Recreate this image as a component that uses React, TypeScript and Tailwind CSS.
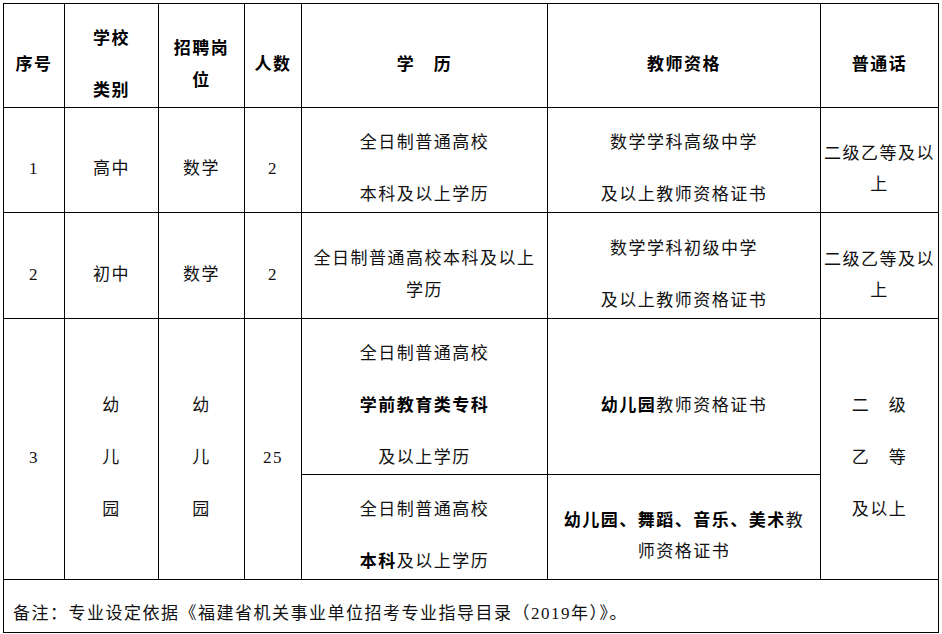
import React from "react";

const font = "font-['Liberation_Serif','Noto_Sans_CJK_SC',serif]";

function Cell({
  children,
  className = "",
}: {
  children?: React.ReactNode;
  className?: string;
}) {
  return (
    <div
      className={`flex flex-col items-center justify-center bg-white pt-[18px] text-center text-[17px] tracking-[1.5px] text-[#111] ${className}`}
    >
      {children}
    </div>
  );
}

function Head({ children, className = "" }: { children: React.ReactNode; className?: string }) {
  return <Cell className={`font-bold text-black ${className}`}>{children}</Cell>;
}

export default function App() {
  return (
    <div className={`min-h-[634px] w-[942px] bg-white ${font}`}>
      <div className="ml-[3px] mt-[3px] grid w-[936px] grid-cols-[60px_93px_85px_56px_245px_272px_117px] grid-rows-[103px_104px_105px_155px_104px_52px] gap-px border border-black bg-black">
        {/* header */}
        <Head>序号</Head>
        <Head className="leading-[52px]">
          <span>学校</span>
          <span>类别</span>
        </Head>
        <Head className="leading-[32px]">
          <span>招聘岗</span>
          <span>位</span>
        </Head>
        <Head>人数</Head>
        <Head>学　历</Head>
        <Head>教师资格</Head>
        <Head>普通话</Head>

        {/* 高中 */}
        <Cell>1</Cell>
        <Cell>高中</Cell>
        <Cell>数学</Cell>
        <Cell>2</Cell>
        <Cell className="leading-[52px]">
          <span>全日制普通高校</span>
          <span>本科及以上学历</span>
        </Cell>
        <Cell className="leading-[52px]">
          <span>数学学科高级中学</span>
          <span>及以上教师资格证书</span>
        </Cell>
        <Cell className="leading-[31px]">
          <span>二级乙等及以</span>
          <span>上</span>
        </Cell>

        {/* 初中 */}
        <Cell>2</Cell>
        <Cell>初中</Cell>
        <Cell>数学</Cell>
        <Cell>2</Cell>
        <Cell className="leading-[32px]">
          <span>全日制普通高校本科及以上</span>
          <span>学历</span>
        </Cell>
        <Cell className="leading-[52px]">
          <span>数学学科初级中学</span>
          <span>及以上教师资格证书</span>
        </Cell>
        <Cell className="leading-[31px]">
          <span>二级乙等及以</span>
          <span>上</span>
        </Cell>

        {/* 幼儿园 */}
        <Cell className="row-span-2">3</Cell>
        <Cell className="row-span-2 leading-[52px]">
          <span>幼</span>
          <span>儿</span>
          <span>园</span>
        </Cell>
        <Cell className="row-span-2 leading-[52px]">
          <span>幼</span>
          <span>儿</span>
          <span>园</span>
        </Cell>
        <Cell className="row-span-2">25</Cell>
        <Cell className="leading-[52px]">
          <span>全日制普通高校</span>
          <span className="font-bold text-black">学前教育类专科</span>
          <span>及以上学历</span>
        </Cell>
        <Cell>
          <span>
            <b className="text-black">幼儿园</b>教师资格证书
          </span>
        </Cell>
        <Cell className="row-span-2 leading-[52px]">
          <span>二　级</span>
          <span>乙　等</span>
          <span>及以上</span>
        </Cell>
        <Cell className="leading-[52px]">
          <span>全日制普通高校</span>
          <span>
            <b className="text-black">本科</b>及以上学历
          </span>
        </Cell>
        <Cell className="leading-[31px]">
          <span>
            <b className="text-black">幼儿园、舞蹈、音乐、美术</b>教
          </span>
          <span>师资格证书</span>
        </Cell>

        {/* note */}
        <div className="col-span-7 flex items-center bg-white pl-[9px] pt-[15px] text-[17px] tracking-[1.5px] text-[#111]">
          备注：专业设定依据《福建省机关事业单位招考专业指导目录（2019年）》。
        </div>
      </div>
    </div>
  );
}
